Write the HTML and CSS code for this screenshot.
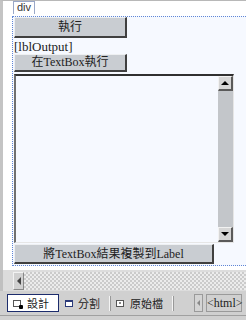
FILE: index.html
```html
<!DOCTYPE html>
<html lang="zh-Hant">
<head>
  <meta charset="UTF-8"/>
  <title>Default.aspx - 設計</title>
  <link rel="stylesheet" href="styles.css">
</head>
<body>
  <div class="designer">
    <div class="surface">
      <span class="tag">div</span>
      <div class="div-box">
        <div class="btn btn-run">執行</div>
        <div class="label">[lblOutput]</div>
        <div class="btn btn-run btn-small">在TextBox執行</div>
        <div class="textbox">
          <div class="text-area"></div>
          <div class="vscroll">
            <div class="sbtn"><span class="arrow up"></span></div>
            <div class="track"></div>
            <div class="sbtn"><span class="arrow down"></span></div>
          </div>
        </div>
        <div class="btn btn-copy">將TextBox結果複製到Label</div>
      </div>
    </div>

    <div class="hscroll">
      <div class="hbtn"><span class="arrow left"></span></div>
      <div class="checker"></div>
    </div>

    <div class="tabs">
      <div class="tab active"><span class="ico ico-design"></span>設計</div>
      <div class="tab tab-split"><span class="ico ico-split"></span>分割</div>
      <span class="sep"></span>
      <div class="tab tab-src"><span class="ico ico-src"></span>原始檔</div>
      <span class="sep"></span>
      <div class="crumb-arrow"><span class="arrow left small"></span></div>
      <div class="crumb">&lt;html&gt;</div>
    </div>
    <div class="status"></div>
  </div>
</body>
</html>
```

FILE: styles.css
```css
:root {
  --chrome: #d0d0d0;
  --btn-face: #c9cdd2;
  --canvas: #f6f9ff;
  --text: #222;
}

* {
  box-sizing: border-box;
}

body {
  margin: 0;
  width: 246px;
  height: 320px;
  overflow: hidden;
  font-family: "Liberation Serif", "Noto Sans CJK TC", serif;
  font-size: 12px;
  color: var(--text);
  background: var(--chrome);
}

.designer {
  display: flex;
  flex-direction: column;
  height: 320px;
}

/* design surface */
.surface {
  height: 270px;
  flex-shrink: 0;
  background: #fff;
  border-top: 1px solid #b8b8b8;
  border-left: 3px solid #c4c4c4;
  overflow: hidden;
}

.tag {
  display: inline-block;
  margin-left: 10px;
  height: 13px;
  padding: 0 3px;
  line-height: 11px;
  font-family: "Liberation Sans", "DejaVu Sans", sans-serif;
  font-size: 11px;
  color: #333;
  background: #fff;
  border: 1px solid #9aa8c8;
  border-bottom: none;
  vertical-align: top;
}

.div-box {
  margin-left: 9px;
  width: 260px;
  height: 250px;
  background: var(--canvas);
  border: 1px dotted #5f86d6;
  border-right: none;
  padding: 0 0 0 1px;
  display: flex;
  flex-direction: column;
  align-items: flex-start;
}

.btn {
  flex-shrink: 0;
  background: var(--btn-face);
  border-top: 1px solid #eef0f2;
  border-left: 1px solid #eef0f2;
  border-right: 2px solid #404040;
  border-bottom: 2px solid #404040;
  text-align: center;
  font-size: 12px;
  line-height: 15px;
}

.btn-run {
  width: 113px;
  height: 21px;
  padding-top: 2px;
}

.btn-small {
  height: 18px;
  padding-top: 0;
}

.label {
  height: 15px;
  margin-top: 1px;
  font-size: 13px;
  line-height: 15px;
}

.textbox {
  flex-shrink: 0;
  margin-top: 2px;
  width: 220px;
  height: 169px;
  display: flex;
  border-top: 2px solid #303030;
  border-left: 2px solid #707070;
  border-right: 1px solid #e6e6e6;
  border-bottom: 1px solid #e6e6e6;
  background: var(--canvas);
}

.text-area {
  flex: 1;
}

.vscroll {
  width: 15px;
  display: flex;
  flex-direction: column;
  background: #c3c6ca;
}

.track {
  flex: 1;
}

.sbtn,
.hbtn,
.crumb-arrow {
  display: flex;
  align-items: center;
  justify-content: center;
  background: #d6d6d6;
  border-top: 1px solid #f2f2f2;
  border-left: 1px solid #f2f2f2;
  border-right: 2px solid #5a5a5a;
  border-bottom: 2px solid #5a5a5a;
}

.sbtn {
  height: 15px;
}

.arrow {
  width: 0;
  height: 0;
  border: 4px solid transparent;
}

.arrow.up {
  border-bottom-color: #000;
  border-top-width: 0;
}

.arrow.down {
  border-top-color: #000;
  border-bottom-width: 0;
}

.arrow.left {
  border-right-color: #444;
  border-left-width: 0;
}

.arrow.small {
  border-right-color: #888;
  border-top-width: 3px;
  border-bottom-width: 3px;
  border-right-width: 3px;
}

.btn-copy {
  margin-top: 1px;
  width: 200px;
  height: 20px;
  padding-top: 2px;
}

/* horizontal scroll strip */
.hscroll {
  height: 21px;
  flex-shrink: 0;
  display: flex;
  padding: 2px 0 1px 10px;
  background: #dcdcdc;
  border-left: 3px solid #c0c0c0;
}

.hbtn {
  width: 11px;
  background: #d0d0d0;
  border-right-width: 1px;
  border-bottom-width: 1px;
  border-right-color: #888;
  border-bottom-color: #888;
}

.checker {
  flex: 1;
  background: repeating-conic-gradient(#cbcbcb 0 25%, #ececec 0 50%) 0 0 / 4px 4px;
}

/* view tabs */
.tabs {
  height: 24px;
  flex-shrink: 0;
  display: flex;
  align-items: center;
  padding-left: 7px;
  background: var(--chrome);
  font-family: "Noto Sans CJK TC", "Liberation Serif", serif;
  font-size: 11px;
  white-space: nowrap;
}

.tabs > * {
  flex-shrink: 0;
}

.tab {
  display: flex;
  align-items: center;
  height: 18px;
  line-height: 16px;
}

.tab.active {
  width: 52px;
  padding-left: 5px;
  background: #fff;
  border: 1px solid #1c2c6c;
}

.tab-split {
  margin-left: 6px;
}

.tab-split .ico {
  margin-right: 5px;
}

.tab-src {
  margin-left: 5px;
}

.ico {
  display: inline-block;
  width: 8px;
  height: 7px;
  margin-right: 6px;
  border: 1px solid #333;
  background: #fff;
}

.ico-design {
  position: relative;
  border-color: #555;
}

.ico-design::after {
  content: "";
  position: absolute;
  right: -3px;
  bottom: -3px;
  width: 4px;
  height: 4px;
  background: #000;
  border-radius: 1px;
}

.ico-split {
  border-color: #2a3a7a;
  border-top-width: 2px;
}

.ico-src {
  border-color: #555;
  background: linear-gradient(#888, #888) center / 2px 2px no-repeat #fff;
}

.sep {
  width: 2px;
  height: 15px;
  margin-left: 9px;
  background: #f4f4f4;
  border-right: 1px solid #999;
}

.crumb-arrow {
  width: 9px;
  height: 18px;
  margin-left: 20px;
  background: #d4d4d4;
  border: 1px solid #9a9a9a;
}

.crumb {
  height: 18px;
  width: 36px;
  margin-left: 3px;
  text-align: center;
  line-height: 16px;
  border: 1px solid #9a9a9a;
  font-family: "Liberation Serif", serif;
  font-size: 12px;
}

.status {
  flex: 1;
  border-top: 1px solid #a0a0a0;
  background: var(--chrome);
}
```
